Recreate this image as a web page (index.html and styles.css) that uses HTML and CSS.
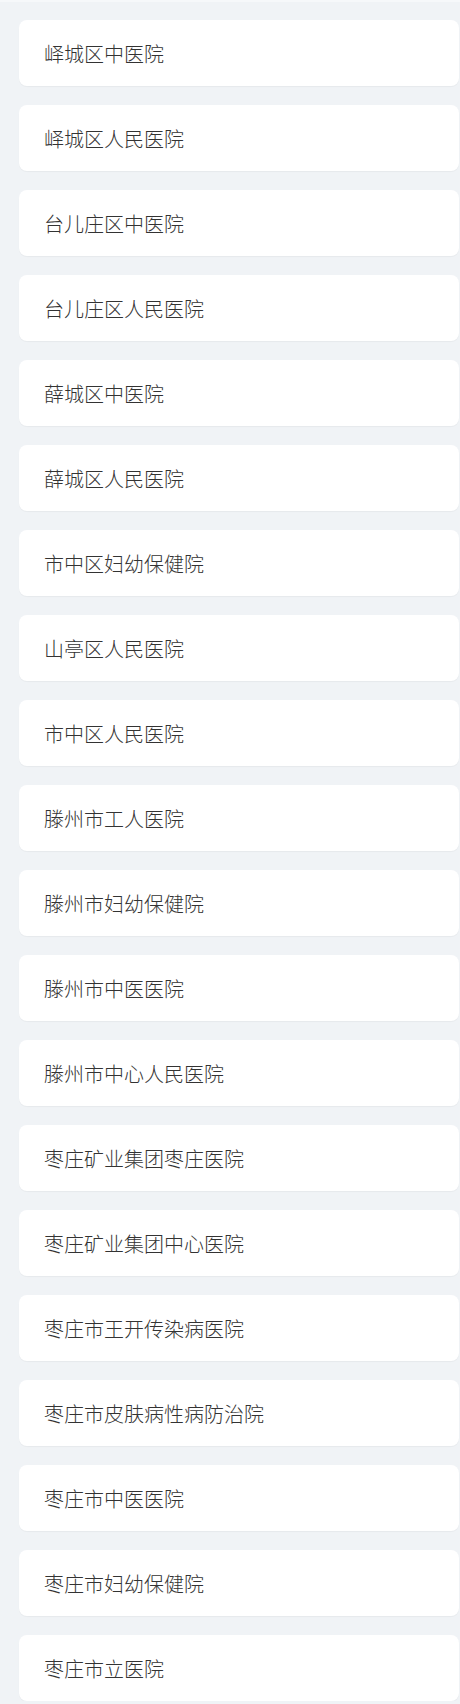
FILE: index.html
```html
<!DOCTYPE html>
<html lang="zh">
<head>
<meta charset="utf-8">
<link rel="stylesheet" href="styles.css">
</head>
<body>
<div class="list">
  <div class="card">峄城区中医院</div>
  <div class="card">峄城区人民医院</div>
  <div class="card">台儿庄区中医院</div>
  <div class="card">台儿庄区人民医院</div>
  <div class="card">薛城区中医院</div>
  <div class="card">薛城区人民医院</div>
  <div class="card">市中区妇幼保健院</div>
  <div class="card">山亭区人民医院</div>
  <div class="card">市中区人民医院</div>
  <div class="card">滕州市工人医院</div>
  <div class="card">滕州市妇幼保健院</div>
  <div class="card">滕州市中医医院</div>
  <div class="card">滕州市中心人民医院</div>
  <div class="card">枣庄矿业集团枣庄医院</div>
  <div class="card">枣庄矿业集团中心医院</div>
  <div class="card">枣庄市王开传染病医院</div>
  <div class="card">枣庄市皮肤病性病防治院</div>
  <div class="card">枣庄市中医医院</div>
  <div class="card">枣庄市妇幼保健院</div>
  <div class="card">枣庄市立医院</div>
</div>
</body>
</html>
```
FILE: styles.css
```css
html, body {
  margin: 0;
  padding: 0;
  background: #f0f3f6;
}
body {
  font-family: "Noto Sans CJK SC", "Noto Sans", sans-serif;
  border-top: 2px solid #f6f8fa;
}
.list {
  display: flex;
  flex-direction: column;
  gap: 19px;
  padding: 18px 1px 0 19px;
}
.card {
  height: 66px;
  box-sizing: border-box;
  background: #ffffff;
  border-radius: 8px;
  box-shadow: 0 1px 1px rgba(0, 0, 0, 0.04);
  display: flex;
  align-items: center;
  padding-left: 25px;
  font-size: 20px;
  font-weight: 300;
  color: #333333;
}
```
